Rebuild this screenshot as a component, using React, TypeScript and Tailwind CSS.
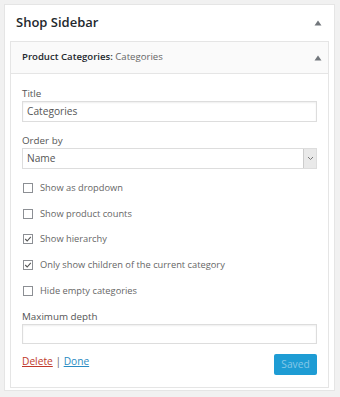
import React from 'react'

const Arrow = () => (
  <svg width="8" height="6" viewBox="0 0 8 6" className="block">
    <path d="M4 0.5 L7.5 5.5 L0.5 5.5 Z" fill="#72777c" />
  </svg>
)

const Check = ({ checked, label }: { checked?: boolean; label: string }) => (
  <div className="flex items-center h-[25.75px]">
    <span className="relative w-[10px] h-[10px] border border-[#8c8f94] bg-white ml-[1px] mr-[7px] shrink-0">
      {checked && (
        <svg width="10" height="10" viewBox="0 0 10 10" className="absolute -left-px -top-px">
          <path d="M2.2 5 L4.2 7 L7.8 2.8" stroke="#555" strokeWidth="1.1" fill="none" />
        </svg>
      )}
    </span>
    <span className="text-[9.3px] text-[#666]">{label}</span>
  </div>
)

export default function App() {
  return (
    <div className="w-[340px] h-[397px] bg-[#f1f1f1] p-[4px] pr-[5px] pb-[6px]" style={{ fontFamily: '"Open Sans", sans-serif' }}>
      <div className="h-full bg-white border border-[#e5e5e5] px-[5px] pb-[2px] flex flex-col">
        <div className="h-[36px] flex items-center justify-between pl-[6px] pr-[7px]">
          <span className="text-[13px] font-semibold text-[#23282d]">Shop Sidebar</span>
          <Arrow />
        </div>
        <div className="flex-1 border border-[#e5e5e5] flex flex-col">
          <div className="h-[32px] bg-[#fafafa] border-b border-[#e5e5e5] flex items-center justify-between pl-[11px] pr-[6px]">
            <span className="text-[9.6px] text-[#23282d]">
              <span className="font-semibold">Product Categories:</span>{' '}
              <span className="text-[#666]">Categories</span>
            </span>
            <Arrow />
          </div>
          <div className="px-[11px] pt-[12px]">
            <div className="text-[9.8px] text-[#555] leading-[15px]">Title</div>
            <div className="h-[21px] border border-[#ddd] flex items-center px-[4px] text-[10.2px] text-[#555] shadow-[inset_0_1px_2px_rgba(0,0,0,0.07)]">
              Categories
            </div>
            <div className="text-[9.8px] text-[#555] leading-[15px] mt-[11px]">Order by</div>
            <div className="h-[21px] border border-[#ddd] flex items-center justify-between pl-[4px] text-[10.2px] text-[#555]">
              <span>Name</span>
              <span className="w-[13px] h-full bg-[#e9e9e9] border-l border-[#ccc] flex items-center justify-center">
                <svg width="7" height="5" viewBox="0 0 7 5">
                  <path d="M1 1 L3.5 3.5 L6 1" stroke="#777" strokeWidth="1" fill="none" />
                </svg>
              </span>
            </div>
            <div className="mt-[6px]">
              <Check label="Show as dropdown" />
              <Check label="Show product counts" />
              <Check checked label="Show hierarchy" />
              <Check checked label="Only show children of the current category" />
              <Check label="Hide empty categories" />
            </div>
            <div className="text-[9.8px] text-[#555] leading-[15px] mt-[5px]">Maximum depth</div>
            <div className="h-[20px] border border-[#ddd] shadow-[inset_0_1px_2px_rgba(0,0,0,0.07)]" />
            <div className="flex justify-between items-start mt-[10px]">
              <div className="text-[10.2px] leading-[15px]">
                <span className="text-[#c0392b] underline">Delete</span>
                <span className="text-[#666]"> | </span>
                <span className="text-[#2a8bc2] underline">Done</span>
              </div>
              <div className="w-[43px] h-[21px] bg-[#1e9cd4] rounded-[2px] text-[10.2px] text-[#86c8e8] flex items-center justify-center">
                Saved
              </div>
            </div>
          </div>
        </div>
      </div>
    </div>
  )
}
